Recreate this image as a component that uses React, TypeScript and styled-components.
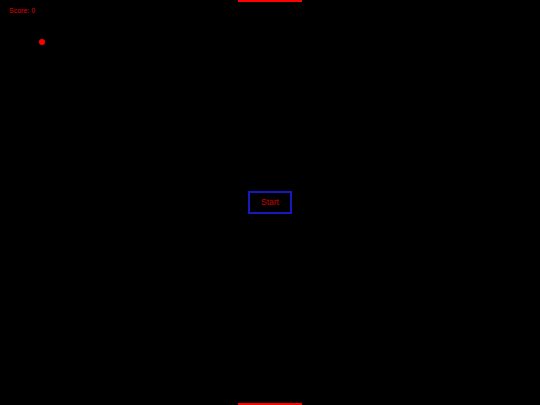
import React from "react";
import styled, { createGlobalStyle } from "styled-components";

const Global = createGlobalStyle`
  html, body { margin: 0; padding: 0; background: #000; }
  #root { width: 540px; height: 405px; }
`;

const Court = styled.div`
  position: relative;
  width: 540px;
  height: 405px;
  background: #000;
  overflow: hidden;
  display: flex;
  align-items: center;
  justify-content: center;
  font-family: "Liberation Sans", Arial, sans-serif;
`;

const Score = styled.div`
  position: absolute;
  left: 9px;
  top: 7px;
  color: #e00000;
  font-size: 7px;
  line-height: 8px;
`;

const Paddle = styled.div<{ $edge: "top" | "bottom" }>`
  position: absolute;
  left: 238px;
  width: 64px;
  height: 2px;
  background: #ff0000;
  ${(p) => (p.$edge === "top" ? "top: 0;" : "bottom: 0;")}
`;

const Ball = styled.div`
  position: absolute;
  left: 39px;
  top: 39px;
  width: 6px;
  height: 6px;
  border-radius: 50%;
  background: #ff0000;
`;

const StartButton = styled.button`
  appearance: none;
  -webkit-appearance: none;
  width: 44px;
  height: 23px;
  box-sizing: border-box;
  background: #000;
  border: 2px solid #1818c0;
  border-radius: 0;
  color: #d00000;
  font-family: "Liberation Sans", Arial, sans-serif;
  font-size: 8.5px;
  line-height: 1;
  padding: 0;
  margin: 0 0 1px 0;
  cursor: pointer;
`;

export default function App() {
  return (
    <>
      <Global />
      <Court>
        <Score>Score: 0</Score>
        <Paddle $edge="top" />
        <Ball />
        <StartButton>Start</StartButton>
        <Paddle $edge="bottom" />
      </Court>
    </>
  );
}
